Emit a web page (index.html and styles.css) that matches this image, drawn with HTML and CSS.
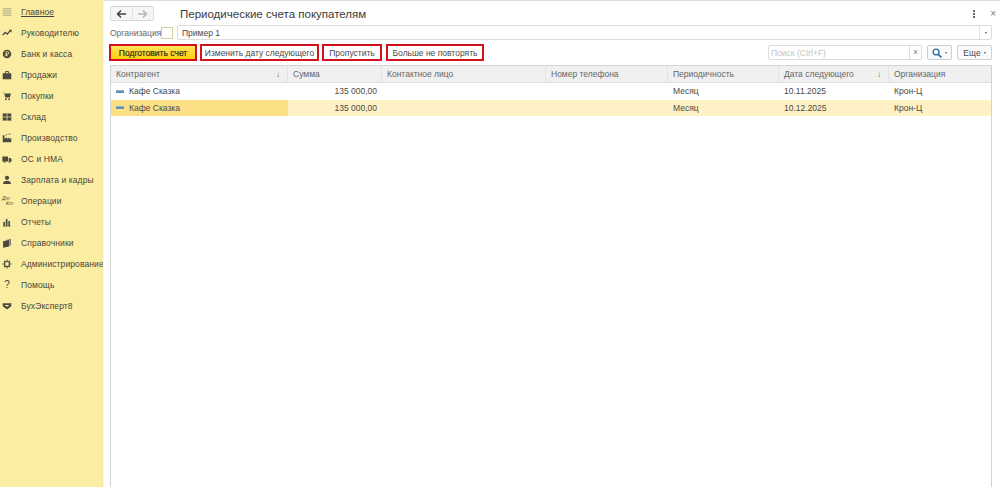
FILE: index.html

```html
<!DOCTYPE html>
<html lang="ru">
<head>
    <meta charset="UTF-8">
    <title>Периодические счета покупателям</title>
    <link rel="stylesheet" href="styles.css">
</head>
<body>
    <div class="app">
        <!-- Sidebar -->
        <nav class="sidebar">
            <a class="nav-item nav-home"><svg class="nav-icon" viewBox="0 0 14 14"><path d="M1 2.5h12M1 5.5h12M1 8.5h12M1 11.5h12" stroke="#9a9a84" stroke-width="1.2" fill="none"/></svg><span>Главное</span></a>
            <a class="nav-item"><svg class="nav-icon" viewBox="0 0 14 14"><path d="M1 10l3.500-4 3 2.500L11 4" stroke="#444" stroke-width="1.800" fill="none"/><path d="M9.500 2.500H13.500V6.500z" fill="#444"/></svg><span>Руководителю</span></a>
            <a class="nav-item"><svg class="nav-icon" viewBox="0 0 14 14"><circle cx="7" cy="7" r="6" fill="#4a4a40"/><path d="M5.800 10.500V3.800h2a1.700 1.700 0 0 1 0 3.500h-3M4.800 9h3" stroke="#f5e79a" stroke-width="1.200" fill="none"/></svg><span>Банк и касса</span></a>
            <a class="nav-item"><svg class="nav-icon" viewBox="0 0 14 14"><rect x="1" y="4.500" width="12" height="8.500" fill="#4a4a40"/><path d="M4.800 4.500V2.200h4.400v2.300" stroke="#4a4a40" stroke-width="1.400" fill="none"/></svg><span>Продажи</span></a>
            <a class="nav-item"><svg class="nav-icon" viewBox="0 0 14 14"><path d="M0.500 2.500h2.500l1.500 6.500h6.500l1.500-5.500H3.500z" fill="#4a4a40"/><circle cx="5.500" cy="11.500" r="1.300" fill="#4a4a40"/><circle cx="10" cy="11.500" r="1.300" fill="#4a4a40"/></svg><span>Покупки</span></a>
            <a class="nav-item"><svg class="nav-icon" viewBox="0 0 14 14"><path d="M1 2h12v10.500H1z" fill="#4a4a40"/><path d="M1 7h12M7 2v10.500M1 12.500h12" stroke="#f5e79a" stroke-width="1"/></svg><span>Склад</span></a>
            <a class="nav-item"><svg class="nav-icon" viewBox="0 0 14 14"><path d="M1 13V3h2.500v5L7 6v2.500L10 6v2.500L13 7v6z" fill="#4a4a40"/><path d="M5 2.500h2.500M9 1.500h3" stroke="#4a4a40" stroke-width="1"/></svg><span>Производство</span></a>
            <a class="nav-item"><svg class="nav-icon" viewBox="0 0 14 14"><path d="M0.500 3.500h8v7h-8zM9.500 5.500h2.500l1.500 2.500v2.500h-4z" fill="#4a4a40"/><circle cx="3.500" cy="11" r="1.300" fill="#4a4a40"/><circle cx="10.500" cy="11" r="1.300" fill="#4a4a40"/></svg><span>ОС и НМА</span></a>
            <a class="nav-item"><svg class="nav-icon" viewBox="0 0 14 14"><circle cx="7" cy="4" r="3" fill="#4a4a40"/><path d="M1.500 12.500c0-3 2-4.500 5.500-4.500s5.500 1.500 5.500 4.500z" fill="#4a4a40"/></svg><span>Зарплата и кадры</span></a>
            <a class="nav-item"><span class="nav-icon nav-dtkt"><i>Дт</i><i>Кт</i></span><span>Операции</span></a>
            <a class="nav-item"><svg class="nav-icon" viewBox="0 0 14 14"><path d="M2 13V7h2v6zM5.500 13V3h2v10zM9 13V6h2v7zM1 13h12" fill="#4a4a40" stroke="#4a4a40" stroke-width=".4"/></svg><span>Отчеты</span></a>
            <a class="nav-item"><svg class="nav-icon" viewBox="0 0 14 14"><path d="M1.500 4.500L10 2.500v9.500l-8.500 1.500z" fill="#4a4a40"/><path d="M4 2.500L12.500 1v9.500L10.500 11V2z" fill="#77776a"/></svg><span>Справочники</span></a>
            <a class="nav-item"><svg class="nav-icon" viewBox="0 0 14 14"><circle cx="7" cy="7" r="3.500" fill="none" stroke="#4a4a40" stroke-width="1.600"/><path d="M7 0.800v2.400M7 10.800v2.400M0.800 7h2.400M10.800 7h2.400M2.600 2.600l1.700 1.700M9.700 9.700l1.700 1.700M2.600 11.400l1.700-1.700M9.700 4.300l1.700-1.700" stroke="#4a4a40" stroke-width="1.500"/></svg><span>Администрирование</span></a>
            <a class="nav-item"><span class="nav-icon nav-help">?</span><span>Помощь</span></a>
            <a class="nav-item"><svg class="nav-icon" viewBox="0 0 14 14"><path d="M1 3h12v4.500L7 12 1 7.500z" fill="#4a4a40"/><path d="M3.500 5.500h7L7 8z" fill="#f5e79a"/></svg><span>БухЭксперт8</span></a>
        </nav>

        <!-- Form -->
        <main class="form">
            <div class="title-row">
                <div class="nav-buttons">
                    <button class="arrow-btn"><svg viewBox="0 0 10 8" width="10" height="8"><path d="M5 .5L1.500 4 5 7.500M1.500 4H10" stroke="#444" stroke-width="1.500" fill="none"/></svg></button>
                    <button class="arrow-btn"><svg viewBox="0 0 10 8" width="10" height="8"><path d="M5 .5L8.500 4 5 7.500M8.500 4H0" stroke="#b5b5b5" stroke-width="1.500" fill="none"/></svg></button>
                </div>
                <h1 class="title">Периодические счета покупателям</h1>
                <div class="window-tools">
                    <svg viewBox="0 0 4 10" width="4" height="10"><path d="M1 1h2v2H1zM1 4h2v2H1zM1 7h2v2H1z" fill="#666"/></svg>
                    <span class="close-x">×</span>
                </div>
            </div>

            <div class="org-row">
                <label class="org-label">Организация:</label>
                <span class="org-check"></span>
                <div class="org-input">
                    <span class="org-value">Пример 1</span>
                    <span class="org-drop"><i class="caret"></i></span>
                </div>
            </div>

            <div class="toolbar">
                <button class="btn btn-main marked">Подготовить счет</button>
                <button class="btn marked btn-change">Изменить дату следующего</button>
                <button class="btn marked btn-skip">Пропустить</button>
                <button class="btn marked btn-stop">Больше не повторять</button>
                <div class="search">
                    <span class="search-text">Поиск (Ctrl+F)</span>
                    <span class="search-clear">×</span>
                </div>
                <button class="btn btn-find"><svg viewBox="0 0 11 11" width="10" height="10"><circle cx="4.500" cy="4.500" r="3.200" fill="none" stroke="#2f6d9e" stroke-width="1.500"/><path d="M7 7l3.300 3.300" stroke="#2f6d9e" stroke-width="1.800"/></svg><i class="caret"></i></button>
                <button class="btn btn-more">Еще<i class="caret"></i></button>
            </div>

            <div class="grid">
                <div class="grid-row grid-head">
                    <div class="cell sorted">Контрагент<span class="sort">↓</span></div>
                    <div class="cell">Сумма</div>
                    <div class="cell">Контактное лицо</div>
                    <div class="cell">Номер телефона</div>
                    <div class="cell">Периодичность</div>
                    <div class="cell sorted">Дата следующего<span class="sort">↓</span></div>
                    <div class="cell">Организация</div>
                </div>
                <div class="grid-row">
                    <div class="cell cell-name"><i class="row-mark"></i>Кафе Сказка</div>
                    <div class="cell cell-sum">135 000,00</div>
                    <div class="cell"></div>
                    <div class="cell"></div>
                    <div class="cell">Месяц</div>
                    <div class="cell">10.11.2025</div>
                    <div class="cell">Крон-Ц</div>
                </div>
                <div class="grid-row row-selected">
                    <div class="cell cell-name cell-current"><i class="row-mark"></i>Кафе Сказка</div>
                    <div class="cell cell-sum">135 000,00</div>
                    <div class="cell"></div>
                    <div class="cell"></div>
                    <div class="cell">Месяц</div>
                    <div class="cell">10.12.2025</div>
                    <div class="cell">Крон-Ц</div>
                </div>
            </div>
        </main>
    </div>
</body>
</html>
```

FILE: styles.css

```css
/* Basic Reset */
* {
    margin: 0;
    padding: 0;
    box-sizing: border-box;
}

html, body {
    height: 100%;
    overflow: hidden;
}

body {
    font-family: "Liberation Sans", Arial, sans-serif;
    font-size: 8.5px;
    color: #4a4a4a;
    background-color: #fff;
}

button {
    font-family: inherit;
}

.app {
    display: flex;
    height: 487px;
}

/* Sidebar */
.sidebar {
    width: 103px;
    flex-shrink: 0;
    background-color: #fbeea3;
    border-right: 1px solid #f3e7a8;
    padding-top: 1px;
}

.nav-item {
    display: flex;
    align-items: center;
    height: 21px;
    color: #46463c;
    letter-spacing: 0.1px;
}

.nav-home span:last-child {
    text-decoration: underline;
}

.nav-icon {
    width: 10px;
    height: 10px;
    margin-left: 2px;
    margin-right: 9px;
    flex-shrink: 0;
}

.nav-dtkt {
    display: flex;
    flex-direction: column;
    font-size: 5px;
    line-height: 5px;
    font-style: italic;
}

.nav-dtkt i:last-child {
    margin-left: 4px;
}

.nav-help {
    font-size: 10px;
    line-height: 10px;
    text-align: center;
}

/* Form */
.form {
    flex: 1;
    min-width: 0;
    display: flex;
    flex-direction: column;
    padding: 5px 8px 0 6px;
    border-top: 1px solid #dcdcdc;
    border-left: 1px solid #f7f7f7;
}

.title-row {
    display: flex;
    align-items: center;
    height: 15px;
    margin-right: -4px;
}

.nav-buttons {
    display: flex;
    width: 44px;
    height: 15px;
    border: 1px solid #d8d8d8;
    border-radius: 2px;
    background-color: #f6f6f6;
}

.arrow-btn {
    flex: 1;
    border: none;
    background: none;
    display: flex;
    align-items: center;
    justify-content: center;
}

.arrow-btn + .arrow-btn {
    border-left: 1px solid #e2e2e2;
}

.title {
    margin-left: 26px;
    font-size: 11.500px;
    font-weight: normal;
    color: #3a3a3a;
}

.window-tools {
    margin-left: auto;
    display: flex;
    align-items: center;
    gap: 14px;
}

.close-x {
    font-size: 10px;
    color: #777;
}

.org-row {
    display: flex;
    align-items: center;
    height: 15px;
    margin-top: 4px;
}

.org-label {
    width: 51px;
    color: #666;
}

.org-check {
    width: 12px;
    height: 12px;
    border: 1px solid #d6cf9f;
    background-color: #fff;
}

.org-input {
    flex: 1;
    height: 15px;
    margin-left: 4px;
    display: flex;
    align-items: center;
    border: 1px solid #dcdcdc;
    border-radius: 2px;
    padding-left: 4px;
}

.org-drop {
    margin-left: auto;
    width: 12px;
    height: 100%;
    border-left: 1px solid #e4e4e4;
    display: flex;
    align-items: center;
    justify-content: center;
}

.caret {
    display: inline-block;
    width: 0;
    height: 0;
    border-left: 1.500px solid transparent;
    border-right: 1.500px solid transparent;
    border-top: 2px solid #555;
}

.toolbar {
    display: flex;
    align-items: center;
    height: 17px;
    margin-top: 4px;
    margin-left: -1px;
}

.btn {
    height: 17px;
    background-color: #fafafa;
    border: 1px solid #d2d2d2;
    border-radius: 2px;
    font-size: 8.500px;
    color: #4a4a4a;
}

.marked {
    border: 2px solid #d2101e;
    border-radius: 0;
    background-color: #fff;
}

.btn-main {
    width: 88px;
    font-weight: normal;
    color: #33301a;
    -webkit-text-stroke: 0.2px #33301a;
    background: linear-gradient(#fde65a, #fbcf0a);
}

.btn-change {
    width: 119px;
    margin-left: 3px;
}

.btn-skip {
    width: 60px;
    margin-left: 3px;
}

.btn-stop {
    width: 98px;
    margin-left: 4px;
}

.search {
    margin-left: auto;
    width: 154px;
    height: 15px;
    display: flex;
    align-items: center;
    justify-content: space-between;
    border: 1px solid #dcdcdc;
    border-radius: 2px;
    padding-left: 2px;
}

.search-text {
    color: #c4c4c4;
}

.search-clear {
    width: 12px;
    height: 100%;
    border-left: 1px solid #dcdcdc;
    text-align: center;
    line-height: 12px;
    color: #777;
}

.btn-find {
    width: 25px;
    height: 15px;
    margin-left: 5px;
    display: flex;
    align-items: center;
    justify-content: center;
    gap: 3px;
    border-color: #c6cfd6;
}

.btn-more {
    width: 35px;
    height: 15px;
    margin-left: 5px;
    display: flex;
    align-items: center;
    justify-content: center;
    gap: 3px;
}

/* Table */
.grid {
    flex: 1;
    margin-top: 4px;
    border: 1px solid #d4d4d4;
    border-bottom: none;
}

.grid-row {
    display: grid;
    grid-template-columns: 177px 94px 164px 122px 111px 110px 1fr;
    height: 16.500px;
}

.grid-head {
    height: 17px;
    background-color: #f0f0f0;
    border-bottom: 1px solid #dedede;
    color: #666;
}

.cell {
    display: flex;
    align-items: center;
    padding: 0 5px;
    white-space: nowrap;
    overflow: hidden;
}

.grid-head .cell {
    border-right: 1px solid #e2e2e2;
}

.grid-head .cell:last-child {
    border-right: none;
}

.sort {
    margin-left: auto;
    padding-right: 2px;
    font-size: 8px;
}

.cell-sum {
    justify-content: flex-end;
}

.row-mark {
    width: 8px;
    height: 3px;
    margin-right: 5px;
    background-color: #5f8fb8;
    border-top: 1px solid #8fb2cd;
}

.row-selected {
    background-color: #fdf1c5;
}

.cell-current {
    background-color: #fddf86;
}
```
